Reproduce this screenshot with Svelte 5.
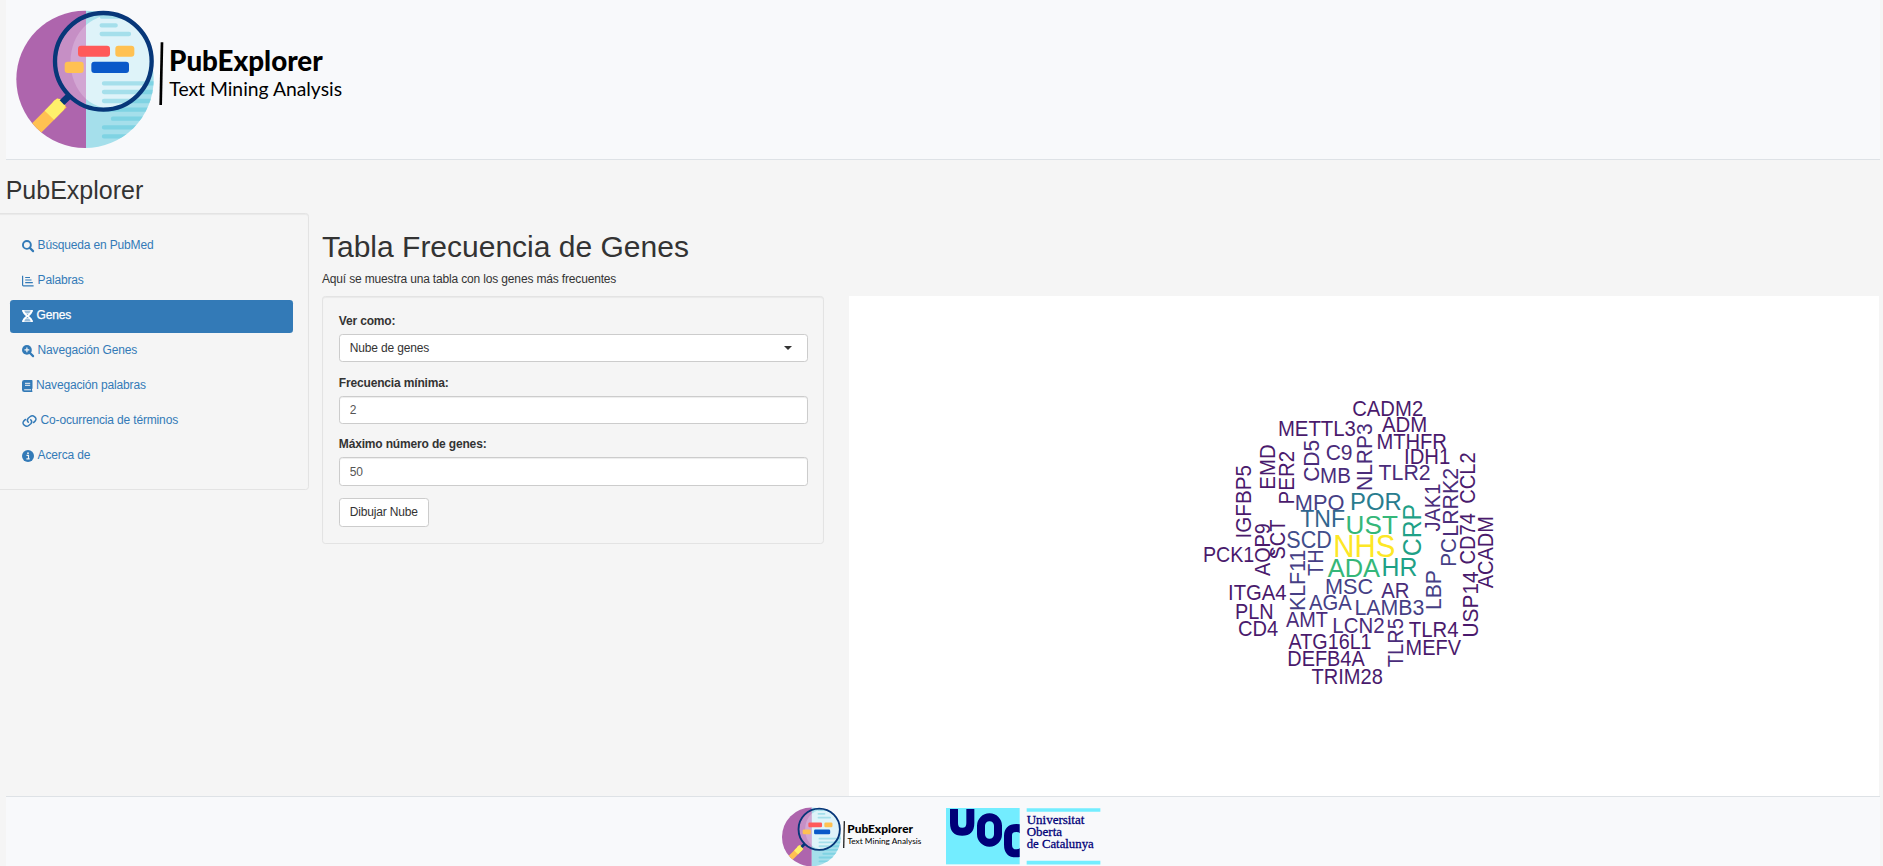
<script>
  const nav = [
    { id: 'search', label: 'Búsqueda en PubMed', w: 12 },
    { id: 'bars', label: 'Palabras', w: 12 },
    { id: 'dna', label: 'Genes', w: 11, active: true },
    { id: 'zoom', label: 'Navegación Genes', w: 12 },
    { id: 'book', label: 'Navegación palabras', w: 10.5 },
    { id: 'link', label: 'Co-ocurrencia de términos', w: 15 },
    { id: 'info', label: 'Acerca de', w: 12 }
  ];

  const c1 = '#4a1a6c', c2 = '#4a2c7a', c3 = '#463f86', c4 = '#414e8b';

  // [word, start of ink, end of ink, baseline, colour, size]
  const across = [
    ['CADM2', 1353.3, 1422.3, 416.3, c1], ['ADM', 1382, 1425.7, 431.5, c1],
    ['METTL3', 1279.5, 1355, 435.5, c1], ['MTHFR', 1378, 1446.7, 448.7, c1],
    ['IDH1', 1406, 1449, 463.7, c1], ['C9', 1326.7, 1351.7, 459.5, c2],
    ['TLR2', 1379, 1429.7, 479.7, c2], ['MB', 1321.7, 1350, 483.3, c2],
    ['MPO', 1296.5, 1343.3, 509.5, c3, 22.5], ['POR', 1352, 1401.5, 509.5, '#287c8e', 24.5],
    ['TNF', 1300.7, 1344.3, 527, '#31668e', 24], ['UST', 1347.7, 1397.3, 533.5, '#35b779', 26],
    ['SCD', 1287.3, 1330.7, 548, c4, 23], ['NHS', 1335.7, 1394, 557, '#fde725', 31.5],
    ['ADA', 1327.7, 1380, 576.7, '#35b779', 26.5], ['HR', 1383.7, 1417.2, 576.2, '#1fa187', 26.5],
    ['PCK1', 1204.6, 1253, 562.3, c1], ['ITGA4', 1230, 1285.7, 600.3, c1],
    ['PLN', 1236.7, 1272, 619.3, c1], ['CD4', 1239, 1277.3, 636.3, c1],
    ['MSC', 1326.7, 1372.3, 594, c3, 22.5], ['AR', 1381.3, 1409.3, 598, c2],
    ['AGA', 1309, 1351.7, 610, c3], ['LAMB3', 1356.2, 1423.5, 615, c3],
    ['AMT', 1286, 1327.5, 626.5, c2], ['LCN2', 1334, 1383.7, 633.3, c2],
    ['ATG16L1', 1288.6, 1370.3, 649.3, c1], ['DEFB4A', 1289, 1364.7, 666.3, c1],
    ['TRIM28', 1312, 1382, 683.5, c1], ['TLR4', 1409.3, 1457.7, 636.5, c1],
    ['MEFV', 1407.2, 1461, 655.3, c1]
  ];

  // [word, top of ink, bottom of ink, baseline x, colour, size]
  const upward = [
    ['EMD', 445.3, 488, 1274.7, c1], ['PER2', 451.7, 502.7, 1293.7, c1],
    ['CD5', 440.7, 480.7, 1318.7, c2], ['NLRP3', 424.3, 489.3, 1372.3, c2],
    ['IGFBP5', 466, 536.5, 1250.5, c1], ['AQP9', 524, 576, 1270, c1],
    ['SCT', 520, 558.5, 1285, c1], ['TH', 551, 575.5, 1322.8, c3, 22],
    ['KLF11', 551, 609.3, 1305, c3], ['CRP', 505, 555, 1420.6, '#1fa187', 26],
    ['JAK1', 485, 531, 1440.3, c2], ['LRRK2', 468.7, 535, 1457.7, c2],
    ['CCL2', 453.3, 502.7, 1474.7, c1], ['CD74', 514, 563.5, 1474.7, c1],
    ['ACADM', 517.7, 588.3, 1492.7, c1], ['PC', 539, 565, 1455.7, c3],
    ['LBP', 571, 608.3, 1440.7, c3], ['USP14', 572.3, 635.7, 1477.7, c1],
    ['TLR5', 619, 666.7, 1403.3, c2]
  ];

  const lead = { A: 0, C: 0.05, M: 0.075, E: 0.08, T: 0.02, I: 0.09, P: 0.08, L: 0.08, N: 0.077, H: 0.08, D: 0.08, U: 0.08, S: 0.045, K: 0.08, J: 0.02 };
  const trail = { A: 0, C: 0.04, M: 0.075, E: 0.04, T: 0.02, P: 0.045, L: 0.03, N: 0.077, H: 0.08, D: 0.045, S: 0.045, R: 0.01, B: 0.04, F: 0.03, V: 0, O: 0.05, 1: 0.06 };

  function measure(word, ink, size) {
    const a = lead[word[0]] * size;
    const b = (trail[word.at(-1)] ?? 0.04) * size;
    return { a, len: ink + a + b };
  }

  const words = [
    ...across.map(([t, s, e, base, fill, size = 21.4]) => {
      const m = measure(t, e - s, size);
      return { t, x: s - m.a, y: base, fill, size, len: m.len, rot: 0 };
    }),
    ...upward.map(([t, s, e, base, fill, size = 21.4]) => {
      const m = measure(t, e - s, size);
      return { t, x: base, y: e + m.a, fill, size, len: m.len, rot: -90 };
    })
  ];

  let minFreq = '2';
  let maxGenes = '50';
</script>

{#snippet logo(key)}
  <svg class="logo {key}" viewBox="0 0 1080 480">
    <defs>
      <clipPath id="disc-{key}"><circle cx="255" cy="238" r="206" /></clipPath>
      <clipPath id="lens-{key}"><circle cx="310" cy="184" r="140" /></clipPath>
    </defs>
    <g clip-path="url(#disc-{key})">
      <rect x="40" y="20" width="218" height="440" fill="#ae65ad" />
      <rect x="258" y="20" width="220" height="440" fill="#a5dfeb" />
      <g stroke="#7fd3e3" stroke-width="13" stroke-linecap="round">
        <path d="M312 250H480M312 276H480M312 303H480M312 329H480M339 356H480M312 382H480M312 409H480" />
      </g>
      <path d="M186 308 90 404" stroke="#ffc152" stroke-width="39" />
      <path d="M178 315 148 346" stroke="#fff06b" stroke-width="39" />
      <circle cx="176" cy="316" r="19.500" fill="#fff06b" />
    </g>
    <path d="M215 280 186 308" stroke="#073779" stroke-width="20" />
    <g clip-path="url(#lens-{key})">
      <rect x="160" y="30" width="98" height="310" fill="#c68fc5" />
      <rect x="258" y="30" width="210" height="310" fill="#a9e0eb" />
      <path d="M258 75C196 130 196 240 258 297Z" fill="#d2a6d3" />
      <path d="M258 75Q278 57 312 47H480V330H330Q282 318 258 297Z" fill="#def3f9" />
      <g stroke="#a5dfeb" stroke-width="13" stroke-linecap="round">
        <path d="M306 50H400M305 76H347M305 102H387M312 250H480M312 276H480M312 303H480" />
      </g>
    </g>
    <circle cx="310" cy="184" r="145" fill="none" stroke="#073779" stroke-width="13" />
    <rect x="234" y="137" width="96" height="33" rx="9" fill="#ff5a5a" />
    <rect x="346" y="137" width="57" height="33" rx="9" fill="#ffc152" />
    <rect x="194" y="185" width="57" height="34" rx="9" fill="#ffc152" />
    <rect x="274" y="185" width="113" height="34" rx="9" fill="#0a59c9" />
    <path d="M486 127 482 315" stroke="#000" stroke-width="8" />
    <text x="507" y="213" class="brand" textLength="461" lengthAdjust="spacingAndGlyphs">PubExplorer</text>
    <text x="508" y="288" class="tag" textLength="518" lengthAdjust="spacingAndGlyphs">Text Mining Analysis</text>
  </svg>
{/snippet}

{#snippet icon(id, w)}
  {#if id === 'search'}
    <svg class="ico" style="width:{w}px" viewBox="0 0 12 12"><circle cx="4.900" cy="4.900" r="3.950" fill="none" stroke="currentColor" stroke-width="1.900" /><path d="M7.700 7.700 11.100 11.100" stroke="currentColor" stroke-width="2.200" stroke-linecap="round" /></svg>
  {:else if id === 'bars'}
    <svg class="ico" style="width:{w}px" viewBox="0 0 12 12"><path d="M.6.8V10.100Q.6 10.900 1.400 10.900H11.600M3.200 2.500H8M3.200 5H9.500M3.200 7.700H10.800" fill="none" stroke="currentColor" stroke-width="1.200" /></svg>
  {:else if id === 'dna'}
    <svg class="ico" style="width:{w}px" viewBox="0 0 11 12"><path d="M1.200 0C1.200 6 9.800 6 9.800 12M9.800 0C9.800 6 1.200 6 1.200 12" fill="none" stroke="currentColor" stroke-width="2" /><path d="M.2.900H10.800M2 3.100H9M2 8.900H9M.2 11.100H10.800" stroke="currentColor" stroke-width="1.400" /></svg>
  {:else if id === 'zoom'}
    <svg class="ico" style="width:{w}px" viewBox="0 0 12 12"><circle cx="4.900" cy="4.900" r="4.900" fill="currentColor" /><path d="M7.700 7.700 11.100 11.100" stroke="currentColor" stroke-width="2.200" stroke-linecap="round" /><path d="M4.900 2.500V7.300M2.500 4.900H7.300" stroke="#f5f5f5" stroke-width="1.200" /></svg>
  {:else if id === 'book'}
    <svg class="ico" style="width:{w}px" viewBox="0 0 10.500 12"><path d="M2.300 0H9.800Q10.500 0 10.500.7V8.300Q10.500 8.800 10 9V10.600Q10.500 10.700 10.500 11.300T9.800 12H2.300Q0 12 0 9.700V2.300Q0 0 2.300 0Z" fill="currentColor" /><path d="M3 3.300H8.200M3 5.300H8.200M2.200 9.800H9" stroke="#f5f5f5" stroke-width="1" /></svg>
  {:else if id === 'link'}
    <svg class="ico" style="width:{w}px" viewBox="0 0 15 12"><g fill="none" stroke="currentColor" stroke-width="1.450" stroke-linecap="round"><path d="M6.300 7.300C5 5.900 5.100 4.300 6.200 3.200L8.300 1.500C10.900-.6 15.800 3 13.300 5.900L11.500 7.600" /><path d="M8.700 4.700C10 6.100 9.900 7.700 8.800 8.800L6.700 10.500C4.100 12.600-.8 9 1.700 6.100L3.500 4.400" /></g></svg>
  {:else}
    <svg class="ico" style="width:{w}px" viewBox="0 0 12 12"><circle cx="6" cy="6" r="6" fill="currentColor" /><path d="M4.500 5.400H6.500V8.900M4.400 8.900H7.700" fill="none" stroke="#f5f5f5" stroke-width="1.200" /><circle cx="6" cy="3.200" r=".9" fill="#f5f5f5" /></svg>
  {/if}
{/snippet}

<div class="page">
  <header>{@render logo('large')}</header>
  <h2>PubExplorer</h2>

  <div class="row">
    <nav class="well side">
      {#each nav as item}
        <a href="#{item.id}" class:active={item.active}>{@render icon(item.id, item.w)}<span>{item.label}</span></a>
      {/each}
    </nav>

    <main>
      <h1>Tabla Frecuencia de Genes</h1>
      <p>Aquí se muestra una tabla con los genes más frecuentes</p>
      <div class="panels">
        <form class="well">
          <div class="group">
            <label for="view">Ver como:</label>
            <div class="control select" id="view"><span>Nube de genes</span><i></i></div>
          </div>
          <div class="group">
            <label for="min">Frecuencia mínima:</label>
            <input class="control" id="min" value={minFreq} />
          </div>
          <div class="group">
            <label for="max">Máximo número de genes:</label>
            <input class="control" id="max" value={maxGenes} />
          </div>
          <button type="button">Dibujar Nube</button>
        </form>
        <svg class="cloud" viewBox="849 296 1030 500">
          {#each words as w}
            <text
              transform="translate({w.x} {w.y}) rotate({w.rot})"
              fill={w.fill}
              font-size={w.size}
              textLength={w.len}
              lengthAdjust="spacingAndGlyphs">{w.t}</text>
          {/each}
        </svg>
      </div>
    </main>
  </div>

  <footer>
    {@render logo('small')}
    <svg class="uoc" viewBox="529 69 464 170">
      <rect x="529" y="69" width="221" height="169" fill="#73edff" />
      <clipPath id="tile"><rect x="529" y="72" width="221" height="166" /></clipPath>
      <g clip-path="url(#tile)" fill="none" stroke="#000078" stroke-width="24">
        <path d="M553 60V114Q553 140 577.500 140T602 114V60" />
        <rect x="634" y="97" width="51" height="76" rx="25" />
        <path d="M766 154Q766 129 740 129T715 154V179Q715 205 740 205T766 181" />
      </g>
      <path d="M771 75H992M771 233H992" stroke="#73edff" stroke-width="11" />
      <g class="uni">
        <text x="771" y="116" textLength="173" lengthAdjust="spacingAndGlyphs">Universitat</text>
        <text x="771" y="153" textLength="106" lengthAdjust="spacingAndGlyphs">Oberta</text>
        <text x="771" y="190" textLength="201" lengthAdjust="spacingAndGlyphs">de Catalunya</text>
      </g>
    </svg>
  </footer>
</div>

<style>
  :global(body) {
    margin: 0;
    background: #f5f5f5;
  }
  .page, .page * { box-sizing: border-box; }
  .page {
    height: 866px;
    overflow: hidden;
    display: flex;
    flex-direction: column;
    font: 12px/16.67px "Liberation Sans", Arial, sans-serif;
    color: #333;
  }
  p, label, .side, .control, button { letter-spacing: -0.16px; }
  header {
    flex: none;
    height: 160px;
    margin: 0 3px 0 6px;
    background: #f8f9fb;
    border-bottom: 1px solid #dee2e6;
  }
  .logo { display: block; }
  .large { width: 360px; height: 160px; margin-left: -6px; }
  .brand { font: 900 84px Lato, sans-serif; }
  .tag { font: 400 57px Lato, sans-serif; }
  h2 {
    margin: 17.3px 0 8.3px 5.7px;
    font-size: 25px;
    line-height: 27.5px;
    font-weight: 400;
  }
  .row {
    display: flex;
    align-items: flex-start;
    height: 583px;
    flex: none;
  }
  .well {
    background: #f5f5f5;
    border: 1px solid #e3e3e3;
    border-radius: 3.3px;
    box-shadow: inset 0 1px 1px rgba(0, 0, 0, 0.05);
  }
  .side {
    flex: none;
    width: 316px;
    height: 277px;
    margin-left: -7px;
    padding: 15.8px 15px 0 16px;
    display: flex;
    flex-direction: column;
    gap: 1.67px;
  }
  .side a {
    height: 33.33px;
    padding: 0 12px 1.6px;
    display: flex;
    align-items: center;
    gap: 3.6px;
    color: #337ab7;
    text-decoration: none;
    border-radius: 3.3px;
  }
  .side a.active { background: #337ab7; color: #fff; }
  .side a.active span { -webkit-text-stroke: 0.25px #fff; }
  .ico { height: 12px; flex: none; overflow: visible; }
  main {
    flex: 1;
    min-width: 0;
    margin: 16.7px 4px 0 13px;
  }
  h1 {
    margin: 0 0 8.3px;
    font-size: 30px;
    line-height: 33px;
    font-weight: 400;
  }
  p { margin: 0 0 8.3px; }
  .panels {
    display: flex;
    justify-content: space-between;
    align-items: flex-start;
  }
  form.well {
    width: 502px;
    padding: 15.8px 15.2px 16.200px 15.8px;
  }
  .group { margin-bottom: 12.5px; }
  label {
    display: block;
    margin-bottom: 4.3px;
    font-weight: 700;
  }
  .control {
    width: 100%;
    height: 28.33px;
    padding: 0 10px;
    display: flex;
    align-items: center;
    justify-content: space-between;
    font: inherit;
    color: #555;
    background: #fff;
    border: 1px solid #ccc;
    border-radius: 3.3px;
    box-shadow: inset 0 1px 1px rgba(0, 0, 0, 0.075);
  }
  .select { color: #333; box-shadow: none; padding-right: 15px; }
  .select i {
    border: 4px solid transparent;
    border-top-color: #333;
    border-bottom: 0;
  }
  button {
    display: block;
    width: 90px;
    height: 28.33px;
    padding: 0;
    font: inherit;
    color: #333;
    background: #fff;
    border: 1px solid #ccc;
    border-radius: 3.3px;
  }
  .cloud {
    width: 1030px;
    height: 500px;
    background: #fff;
    font-family: "Liberation Sans", Arial, sans-serif;
  }
  footer {
    flex: 1;
    margin: 0 3px 0 6px;
    padding: 6px 0 0 769px;
    display: flex;
    align-items: flex-start;
    gap: 17px;
    background: #f8f9fb;
    border-top: 1px solid #dee2e6;
  }
  .small { width: 154px; height: 68.5px; flex: none; }
  .uoc { width: 154.7px; height: 56.7px; margin-top: 5px; flex: none; }
  .uni {
    font: 37px "Liberation Serif", serif;
    fill: #000078;
    stroke: #000078;
    stroke-width: 0.8;
  }
</style>
